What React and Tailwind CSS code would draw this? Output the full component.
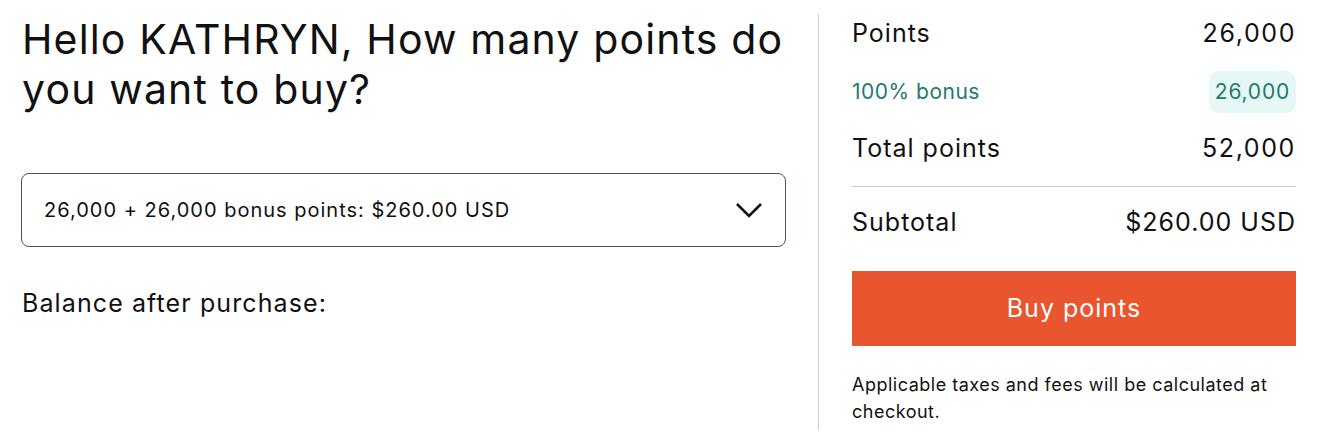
import React from "react";

export default function App() {
  return (
    <div className="w-[1321px] h-[438px] bg-white flex text-[#222]" style={{ fontFamily: "Inter, 'Noto Sans', sans-serif" }}>
      <div className="w-[818px] pl-[22px] pr-[32px] pt-[14px] flex flex-col">
        <h1 className="text-[41px] leading-[50px] font-normal text-[#111] tracking-[1.15px]">
          Hello KATHRYN, How many points do you want to buy?
        </h1>
        <div className="mt-[59px] h-[74px] w-[765px] -ml-px border border-[#4a5563] rounded-[8px] flex items-center justify-between pl-[22px] pr-[22px]">
          <span className="text-[20px] tracking-[1px] text-[#111]">26,000 + 26,000 bonus points: $260.00 USD</span>
          <svg width="28" height="16" viewBox="0 0 28 16" fill="none">
            <path d="M2 2 L14 14 L26 2" stroke="#111" strokeWidth="2.6" />
          </svg>
        </div>
        <div className="mt-[38px] text-[25px] tracking-[1.1px] text-[#111]">Balance after purchase:</div>
      </div>
      <div className="my-[14px] w-px bg-[#d0d0d0] h-[416px]" />
      <div className="pl-[33px] pr-[25px] flex-1 pt-[17px] flex flex-col">
        <div className="flex justify-between items-center text-[25px] tracking-[1px] text-[#111] h-[34px]">
          <span>Points</span>
          <span className="tracking-[1.6px]">26,000</span>
        </div>
        <div className="flex justify-between items-center mt-[20px] h-[42px] text-[21px] tracking-[0.5px] text-[#237a6f]">
          <span>100% bonus</span>
          <span className="bg-[#e6f8f5] rounded-[10px] px-[6px] h-[42px] flex items-center tracking-[0.8px]">26,000</span>
        </div>
        <div className="flex justify-between items-center text-[25px] tracking-[1px] text-[#111] h-[34px] mt-[19px]">
          <span>Total points</span>
          <span className="tracking-[1.6px]">52,000</span>
        </div>
        <div className="h-px bg-[#cccccc] mt-[20px]" />
        <div className="flex justify-between items-center text-[25px] tracking-[1px] text-[#111] h-[34px] mt-[19px]">
          <span>Subtotal</span>
          <span>$260.00 USD</span>
        </div>
        <button className="mt-[31px] h-[75px] bg-[#e8552f] text-white text-[25px] tracking-[1px] w-full">Buy points</button>
        <p className="mt-[25px] text-[18px] tracking-[0.5px] leading-[27px] text-[#111]">
          Applicable taxes and fees will be calculated at checkout.
        </p>
      </div>
    </div>
  );
}
